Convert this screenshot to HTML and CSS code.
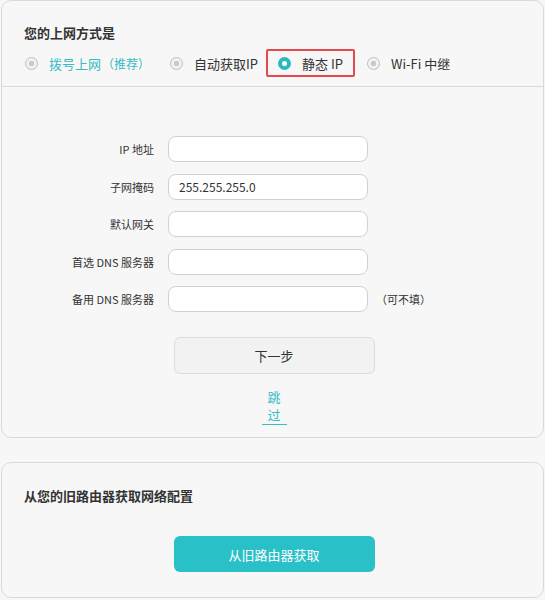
FILE: index.html
```html
<!DOCTYPE html>
<html>
  <head>
    <meta charset="utf-8">
    <title>上网设置</title>
    <link rel="stylesheet" href="styles.css">
  </head>
  <body>
  <div class="panel wan-panel">
    <div class="mode-head">
      <h2>您的上网方式是</h2>
      <div class="mode-list">
        <label class="opt opt-tip"><span class="dot"></span>拨号上网<small>（推荐）</small></label>
        <label class="opt opt-auto"><span class="dot"></span>自动获取IP</label>
        <label class="opt selected"><span class="dot"></span>静态 IP</label>
        <label class="opt"><span class="dot"></span>Wi-Fi 中继</label>
      </div>
    </div>
    <form class="static-form">
      <div class="form-grid">
        <label for="ip">IP 地址</label>
        <input type="text" id="ip">
        <span></span>

        <label for="mask">子网掩码</label>
        <input type="text" id="mask" value="255.255.255.0">
        <span></span>

        <label for="gateway">默认网关</label>
        <input type="text" id="gateway">
        <span></span>

        <label for="dns1">首选 DNS 服务器</label>
        <input type="text" id="dns1">
        <span></span>

        <label for="dns2">备用 DNS 服务器</label>
        <input type="text" id="dns2">
        <span class="note">（可不填）</span>
      </div>
      <div class="actions">
        <button type="button" class="btn-next">下一步</button>
        <a href="#" class="skip">跳过</a>
      </div>
    </form>
  </div>
  <div class="panel clone-panel">
    <h2>从您的旧路由器获取网络配置</h2>
    <div class="actions">
      <button type="button" class="btn-clone">从旧路由器获取</button>
    </div>
  </div>
</body>
</html>
```

FILE: styles.css
```css
body {
  margin: 0;
  background-color: #f7f7f7;
  font-family: "Noto Sans CJK SC", "Noto Sans", sans-serif;
  color: #333;
}

.panel {
  margin: 0 1px;
  border: 1px solid #d9d9d9;
  border-radius: 10px;
}

h2 {
  margin: 0;
  font-size: 13px;
  line-height: 18px;
  font-weight: bold;
  color: #333;
}

.mode-head {
  padding: 23px 0 9px 22px;
  border-bottom: 1px solid #d9d9d9;
}

.mode-list {
  display: flex;
  margin: 7px 0 0 -11px;
}

.opt {
  display: flex;
  align-items: center;
  height: 24px;
  padding: 0 10px;
  border: 2px solid transparent;
  border-radius: 2px;
  font-size: 13px;
  color: #333;
}

.opt small {
  margin-left: 1px;
  margin-right: -4px;
  font-size: 12px;
}

.opt-tip {
  color: #37bcc5;
}

.opt-auto {
  margin-right: -2px;
}

.opt.selected {
  margin-left: -2px;
  border-color: #e5484d;
}

.dot {
  box-sizing: border-box;
  width: 13px;
  height: 13px;
  margin-right: 11px;
  border: 1px solid #bdbdbd;
  border-radius: 50%;
  background: radial-gradient(circle, #c9c9c9 0, #c9c9c9 2.5px, #f2f2f2 3px);
}

.selected .dot {
  border: 4px solid #2bb9c1;
  background: #fff;
}

.static-form {
  padding: 49px 0 12px;
}

.form-grid {
  display: grid;
  grid-template-columns: 152px 200px auto;
  column-gap: 14px;
  row-gap: 11.5px;
  align-items: center;
}

.form-grid label {
  text-align: right;
  font-size: 11px;
  color: #333;
}

.form-grid input {
  box-sizing: border-box;
  height: 26px;
  padding: 0 10px;
  border: 1px solid #d0d0d0;
  border-radius: 8px;
  background-color: #fff;
  font-family: inherit;
  font-size: 12px;
  color: #333;
}

.note {
  margin-left: -6px;
  font-size: 11px;
}

.actions {
  display: flex;
  flex-direction: column;
  align-items: center;
  padding-left: 3px;
}

.btn-next, .btn-clone {
  width: 201px;
  border-radius: 6px;
  font-family: inherit;
  font-size: 13px;
  cursor: pointer;
}

.btn-next {
  height: 37px;
  margin-top: 25px;
  border: 1px solid #dcdcdc;
  background-color: #f2f2f2;
  color: #333;
}

.skip {
  display: block;
  width: 25px;
  margin-top: 14px;
  text-align: center;
  font-size: 13px;
  line-height: 18px;
  color: #37bcc5;
  text-decoration: none;
  border-bottom: 1px solid #37bcc5;
}

.clone-panel {
  margin-top: 24px;
  padding: 24px 0 25px 22px;
}

.clone-panel .actions {
  padding-left: 0;
  margin-left: -19px;
}

.btn-clone {
  height: 36px;
  margin-top: 31px;
  border: none;
  background-color: #2ac0c7;
  color: #fff;
}
```
